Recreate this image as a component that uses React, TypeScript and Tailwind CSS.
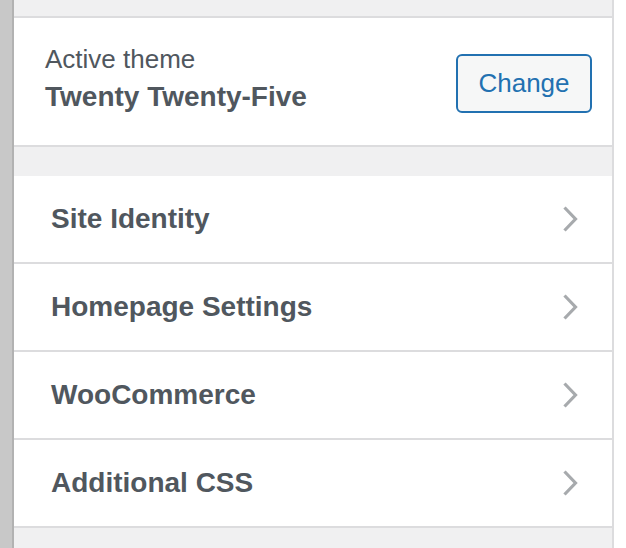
import React from 'react';

const sections = ['Site Identity', 'Homepage Settings', 'WooCommerce', 'Additional CSS'];

const Chevron = () => (
  <svg width="16" height="28" viewBox="0 0 16 28" fill="none" className="shrink-0">
    <polyline points="2.5,2.5 13.5,14 2.5,25.5" stroke="#a7aaad" strokeWidth="3.2" />
  </svg>
);

export default function App() {
  return (
    <div
      className="flex w-[626px] h-[548px] overflow-hidden bg-white text-[#50575e]"
      style={{ fontFamily: '"Liberation Sans", Arial, sans-serif' }}
    >
      {/* preview edge */}
      <div className="w-[14px] shrink-0 bg-[#c8c8c8] border-r-2 border-[#b2b2b2]" />

      <div className="flex flex-col w-[598px] shrink-0 bg-[#f0f0f1]">
        <div className="h-[16px] shrink-0" />

        <div className="flex items-start justify-between h-[131px] shrink-0 bg-white border-y-2 border-[#dcdcde] pl-[31px] pr-[20px]">
          <div className="pt-[23px]">
            <div className="text-[26px] leading-[37px]">Active theme</div>
            <div className="text-[28px] leading-[37px] font-bold">Twenty Twenty-Five</div>
          </div>
          <button className="mt-[36px] w-[136px] h-[59px] rounded-[6px] border-2 border-[#2271b1] bg-[#f6f7f7] text-[26px] text-[#2271b1]">
            Change
          </button>
        </div>

        <div className="h-[29px] shrink-0" />

        {sections.map((s) => (
          <div
            key={s}
            className="flex items-center justify-between h-[88px] shrink-0 bg-white border-b-2 border-[#dcdcde] pl-[37px] pr-[34px]"
          >
            <span className="text-[28px] font-bold">{s}</span>
            <Chevron />
          </div>
        ))}
      </div>

      <div className="w-[2px] shrink-0 bg-[#dcdcde]" />
      <div className="flex-1 bg-white" />
    </div>
  );
}
